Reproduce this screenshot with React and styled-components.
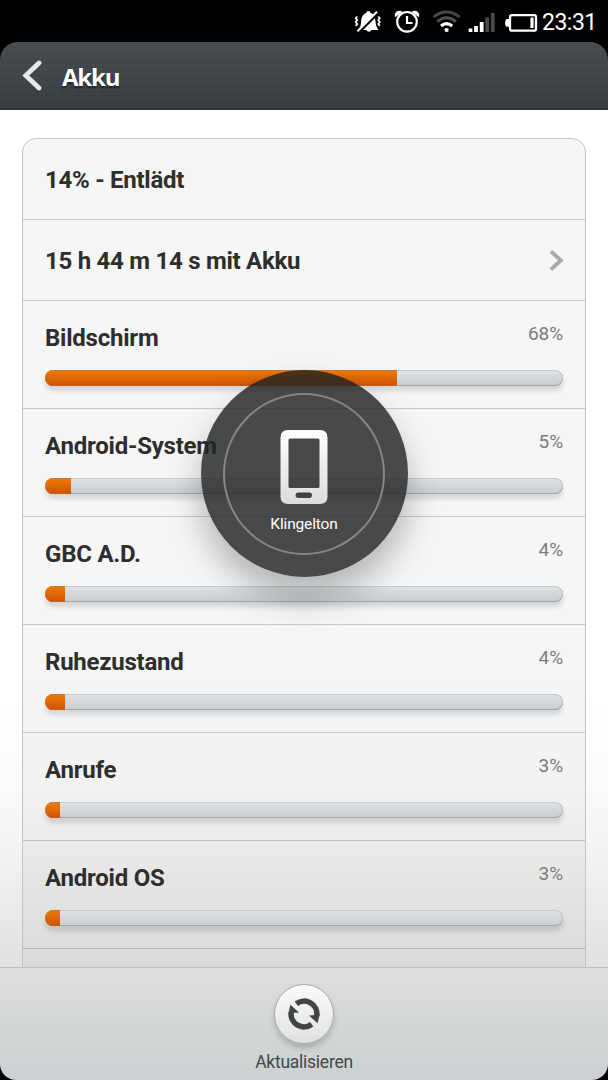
import React from 'react';
import styled, { createGlobalStyle } from 'styled-components';

const consumers = [
  { name: 'Bildschirm', percent: 68, fill: 352 },
  { name: 'Android-System', percent: 5, fill: 26 },
  { name: 'GBC A.D.', percent: 4, fill: 20 },
  { name: 'Ruhezustand', percent: 4, fill: 20 },
  { name: 'Anrufe', percent: 3, fill: 15 },
  { name: 'Android OS', percent: 3, fill: 15 }
];

function StatusIcons() {
  return (
    <svg width="200" height="42" viewBox="340 0 200 42" fill="none">
      {/* muted bell */}
      <path
        d="M358.500 30c2-2.500 2.300-5 2.600-8.500.4-5.200 2.500-8 5.600-8.700v-1.600h3.400v1.600c3.200.7 4.900 3.200 5.300 7.700.4 4 .9 7 3.100 9.500h-7.200c-.5 2.200-4.200 2.200-4.800 0z"
        fill="#fff"
      />
      <path d="M358.500 32.500l20-20" stroke="#000" strokeWidth="3" />
      <path d="M357.500 31.200l19.500-19.400" stroke="#fff" strokeWidth="2" />
      <path
        d="M357.300 16.500l-1.600 1.700 1.600 1.900-1.600 1.900 1.600 1.900-1.600 2M378.200 16.500l1.600 1.700-1.600 1.900 1.600 1.900-1.600 1.900 1.600 2"
        stroke="#fff"
        strokeWidth="1.700"
      />
      {/* alarm clock */}
      <circle cx="407" cy="21.800" r="9.800" stroke="#fff" strokeWidth="2.200" />
      <path d="M407 16v7h5.500" stroke="#fff" strokeWidth="2.200" />
      <path
        d="M395.500 16c-.6-3 2.300-5.100 5.500-4.200zM418.500 16c.6-3-2.300-5.100-5.500-4.200z"
        fill="#fff"
        stroke="#fff"
        strokeWidth="1.600"
        strokeLinejoin="round"
      />
      {/* wifi */}
      <circle cx="446.600" cy="30" r="2.100" fill="#fff" />
      <path d="M441 26q5.600-4.800 11.200 0" stroke="#fff" strokeWidth="3" />
      <path d="M437.300 21.600q9.300-7.600 18.600 0" stroke="#505050" strokeWidth="2.800" />
      <path d="M433.500 17q13.100-10 26.200 0" stroke="#484848" strokeWidth="2.800" />
      {/* signal */}
      <path d="M470.500 32v-3.500M476 32v-6M481.700 32V22" stroke="#fff" strokeWidth="3.800" />
      <path d="M487.200 32V17.500M492.800 32V13" stroke="#494949" strokeWidth="3.800" />
      {/* battery */}
      <rect x="510" y="15.200" width="26" height="15.500" rx="2" stroke="#fff" strokeWidth="2.300" />
      <path d="M509 19h-2.500q-1.500 1.500-1.500 3.900t1.500 3.900h2.500z" fill="#fff" />
      <path d="M532 17.500v10.500" stroke="#fff" strokeWidth="3.200" />
    </svg>
  );
}

function PhoneIcon() {
  return (
    <svg width="48" height="75" viewBox="0 0 48 75">
      <defs>
        <linearGradient id="phone" x1="0" y1="0" x2="0" y2="1">
          <stop offset="0" stopColor="#fff" />
          <stop offset="1" stopColor="#dcdcdc" />
        </linearGradient>
      </defs>
      <path
        fillRule="evenodd"
        fill="url(#phone)"
        d="M8 0h32q7.500 0 7.500 7.500v59q0 7.500-7.500 7.500H8Q.5 74 .5 66.500v-59Q.5 0 8 0zM10 8.500q-1.500 0-1.500 1.500v46.500q0 1.500 1.500 1.500h28q1.500 0 1.500-1.500V10q0-1.500-1.500-1.500zM18.500 62.500q-3 0-3 2.700t3 2.800h10.500q3 0 3-2.800t-3-2.700z"
      />
    </svg>
  );
}

function RefreshIcon() {
  return (
    <svg width="32" height="32" viewBox="0 0 32 32" fill="none">
      <path d="M8.300 5.800A12.800 12.800 0 0 1 28.800 17.500" stroke="#424547" strokeWidth="5.600" />
      <path d="M21 17.600l10.600-.8-2 8.400z" fill="#424547" />
      <path d="M23.700 26.200A12.800 12.800 0 0 1 3.200 14.500" stroke="#424547" strokeWidth="5.600" />
      <path d="M11 14.400l-10.600.8 2-8.400z" fill="#424547" />
    </svg>
  );
}

function App() {
  return (
    <SC.Screen>
      <GlobalStyle />
      <SC.StatusBar>
        <StatusIcons />
        <SC.Clock>23:31</SC.Clock>
      </SC.StatusBar>
      <SC.Header>
        <svg width="20" height="32" viewBox="0 0 20 32" fill="none">
          <path d="M17 4L3.800 16.500 17 29" stroke="#e6e8e9" strokeWidth="4.800" strokeLinecap="round" />
        </svg>
        <SC.Title>Akku</SC.Title>
      </SC.Header>
      <SC.Content>
        <SC.Card>
          <SC.InfoRow>14% - Entlädt</SC.InfoRow>
          <SC.InfoRow>
            15 h 44 m 14 s mit Akku
            <svg width="14" height="22" viewBox="0 0 14 22" fill="none">
              <path d="M2.200 2.500l8.500 7.900-8.500 8" stroke="#a9a9a9" strokeWidth="4" strokeLinecap="round" />
            </svg>
          </SC.InfoRow>
          {consumers.map(item => (
            <SC.UsageRow key={item.name}>
              <SC.UsageHead>
                <span>{item.name}</span>
                <SC.Percent>{`${item.percent}%`}</SC.Percent>
              </SC.UsageHead>
              <SC.Track>
                <SC.Fill style={{ width: item.fill }} />
              </SC.Track>
            </SC.UsageRow>
          ))}
        </SC.Card>
      </SC.Content>
      <SC.Footer>
        <SC.RoundButton aria-label="Aktualisieren">
          <RefreshIcon />
        </SC.RoundButton>
        <SC.FooterLabel>Aktualisieren</SC.FooterLabel>
      </SC.Footer>
      <SC.Toast>
        <SC.Ring>
          <PhoneIcon />
          <SC.ToastLabel>Klingelton</SC.ToastLabel>
        </SC.Ring>
      </SC.Toast>
    </SC.Screen>
  );
}

const GlobalStyle = createGlobalStyle`
  body {
    margin: 0;
    background: #000;
    font-family: Roboto, sans-serif;
  }

  * {
    box-sizing: border-box;
  }
`;

const SC = {
  Screen: styled.div`
    position: relative;
    display: flex;
    flex-direction: column;
    width: 608px;
    height: 1080px;
    overflow: hidden;
    background: #000;
  `,
  StatusBar: styled.div`
    display: flex;
    justify-content: flex-end;
    height: 42px;
    padding-right: 12px;
  `,
  Clock: styled.span`
    width: 56px;
    margin-top: 8px;
    padding-left: 2px;
    font-size: 23px;
    letter-spacing: -0.5px;
    line-height: 30px;
    color: #fff;
    white-space: nowrap;
  `,
  Header: styled.header`
    display: flex;
    align-items: center;
    height: 68px;
    padding-left: 22px;
    border-radius: 18px 18px 0 0;
    border-bottom: 2px solid #303437;
    background: repeating-linear-gradient(90deg, rgba(255, 255, 255, 0.02) 0 1px, transparent 1px 4px),
      repeating-linear-gradient(0deg, rgba(0, 0, 0, 0.05) 0 1px, transparent 1px 4px),
      linear-gradient(#484d50, #383d41);
  `,
  Title: styled.h1`
    margin: 2px 0 0 20px;
    font-family: 'Open Sans', sans-serif;
    font-size: 24px;
    font-weight: 700;
    letter-spacing: -1.2px;
    color: #fff;
    text-shadow: 0 2px 2px rgba(0, 0, 0, 0.5);
  `,
  Content: styled.main`
    height: 857px;
    padding: 28px 22px 0;
    overflow: hidden;
    background: linear-gradient(#fff 580px, #fbfbfb 670px, #f0f1ef 765px, #e0e2df 857px);
  `,
  Card: styled.section`
    height: 850px;
    border: 1px solid #c2c3c3;
    border-radius: 14px 14px 0 0;
    background: linear-gradient(#f6f6f6 540px, #f1f2f1 650px, #e6e7e5 740px, #d9dbd8 830px);
  `,
  InfoRow: styled.div`
    display: flex;
    align-items: center;
    justify-content: space-between;
    height: 81px;
    padding: 1px 21px 0 22px;
    border-bottom: 1px solid #cacbcb;
    font-size: 24px;
    font-weight: 700;
    letter-spacing: -0.27px;
    color: #2d2e2e;
  `,
  UsageRow: styled.div`
    height: 108px;
    padding: 22px 22px 0;
    border-bottom: 1px solid rgba(0, 0, 0, 0.18);
  `,
  UsageHead: styled.div`
    display: flex;
    justify-content: space-between;
    height: 47px;
    font-size: 24px;
    font-weight: 700;
    letter-spacing: -0.23px;
    line-height: 31px;
    color: #2d2e2e;
  `,
  Percent: styled.span`
    font-size: 19px;
    font-weight: 400;
    letter-spacing: -0.1px;
    line-height: 22px;
    color: #7c7d7d;
  `,
  Track: styled.div`
    width: 518px;
    height: 16px;
    overflow: hidden;
    border-radius: 8px;
    background: linear-gradient(#dfe4e6, #c7cdd0);
    box-shadow: inset 0 -1px 0 #a4a8aa, inset 0 0 0 1px rgba(130, 135, 138, 0.28), 0 5px 5px rgba(0, 0, 0, 0.13);
  `,
  Fill: styled.div`
    height: 100%;
    background: linear-gradient(#ee7d08, #cf5100);
    box-shadow: inset 0 1px 0 #c9782b, inset 0 -1px 0 #b9622a;
  `,
  Footer: styled.footer`
    display: flex;
    flex-direction: column;
    align-items: center;
    height: 113px;
    padding-top: 16px;
    border-top: 1px solid #bcbfbc;
    border-radius: 0 0 16px 16px;
    background: linear-gradient(#dfe0dd, #d7d9da 35%, #cbd1d2);
  `,
  RoundButton: styled.button`
    display: flex;
    align-items: center;
    justify-content: center;
    width: 60px;
    height: 60px;
    padding: 0;
    border: 1px solid #aaa;
    border-radius: 50%;
    background: linear-gradient(#fafafa, #e2e2e2);
    box-shadow: 0 4px 6px rgba(0, 0, 0, 0.2);
  `,
  FooterLabel: styled.span`
    margin-top: 8px;
    font-size: 17.5px;
    letter-spacing: -0.25px;
    line-height: 20px;
    color: #444747;
  `,
  Toast: styled.div`
    position: absolute;
    top: 370px;
    left: 200.500px;
    display: flex;
    align-items: center;
    justify-content: center;
    width: 207px;
    height: 207px;
    border-radius: 50%;
    background: rgba(33, 34, 35, 0.82);
    box-shadow: 0 20px 34px rgba(0, 0, 0, 0.27);
  `,
  Ring: styled.div`
    display: flex;
    flex-direction: column;
    align-items: center;
    width: 162px;
    height: 162px;
    padding-top: 35px;
    border: 2px solid #858687;
    border-radius: 50%;
  `,
  ToastLabel: styled.span`
    margin-top: 9px;
    font-size: 15.5px;
    letter-spacing: -0.15px;
    line-height: 20px;
    color: #fff;
  `
};

export default App;
